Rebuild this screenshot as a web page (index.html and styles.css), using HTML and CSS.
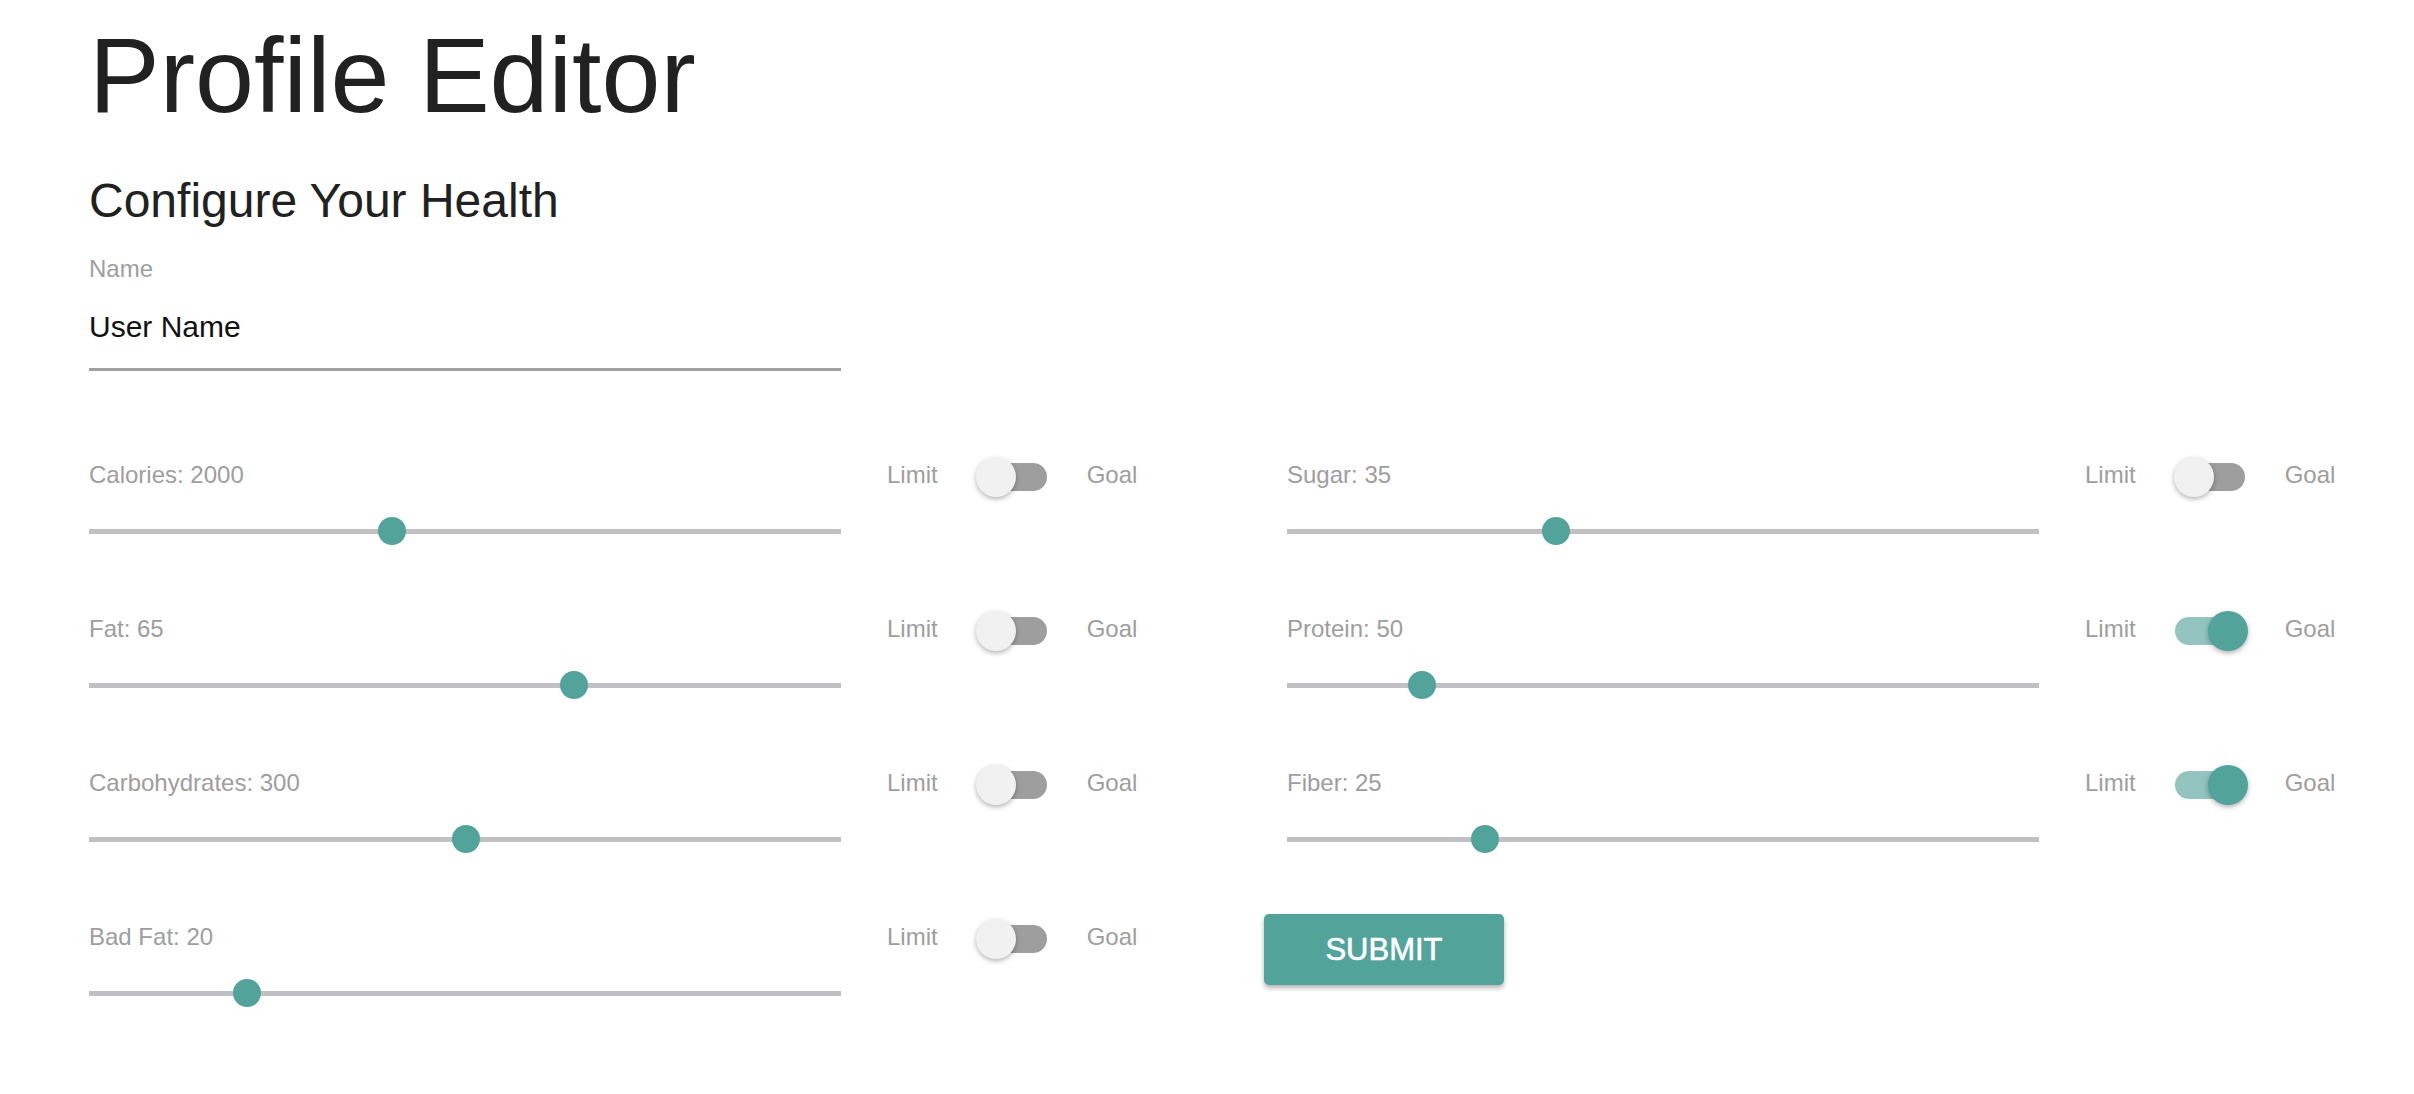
FILE: index.html
```html
<!DOCTYPE html>
<html lang="en">
<head>
<meta charset="utf-8">
<title>Profile Editor</title>
<link rel="stylesheet" href="styles.css">
</head>
<body>
<div class="page">
  <h1 class="title">Profile Editor</h1>
  <h2 class="subtitle">Configure Your Health</h2>
  <div class="field">
    <div class="field-label">Name</div>
    <div class="field-value">User Name</div>
  </div>
  <div class="grid">
    <div class="col">
      <div class="row">
        <div class="slider">
          <div class="slider-label">Calories: 2000</div>
          <div class="track-wrap"><div class="track"><div class="thumb" style="left:40.3%"></div></div></div>
        </div>
        <div class="controls"><span class="ctl-text">Limit</span><div class="toggle"><div class="toggle-track"></div><div class="toggle-thumb"></div></div><span class="ctl-text">Goal</span></div>
      </div>
      <div class="row">
        <div class="slider">
          <div class="slider-label">Fat: 65</div>
          <div class="track-wrap"><div class="track"><div class="thumb" style="left:64.5%"></div></div></div>
        </div>
        <div class="controls"><span class="ctl-text">Limit</span><div class="toggle"><div class="toggle-track"></div><div class="toggle-thumb"></div></div><span class="ctl-text">Goal</span></div>
      </div>
      <div class="row">
        <div class="slider">
          <div class="slider-label">Carbohydrates: 300</div>
          <div class="track-wrap"><div class="track"><div class="thumb" style="left:50.1%"></div></div></div>
        </div>
        <div class="controls"><span class="ctl-text">Limit</span><div class="toggle"><div class="toggle-track"></div><div class="toggle-thumb"></div></div><span class="ctl-text">Goal</span></div>
      </div>
      <div class="row">
        <div class="slider">
          <div class="slider-label">Bad Fat: 20</div>
          <div class="track-wrap"><div class="track"><div class="thumb" style="left:21%"></div></div></div>
        </div>
        <div class="controls"><span class="ctl-text">Limit</span><div class="toggle"><div class="toggle-track"></div><div class="toggle-thumb"></div></div><span class="ctl-text">Goal</span></div>
      </div>
    </div>
    <div class="col">
      <div class="row">
        <div class="slider">
          <div class="slider-label">Sugar: 35</div>
          <div class="track-wrap"><div class="track"><div class="thumb" style="left:35.8%"></div></div></div>
        </div>
        <div class="controls"><span class="ctl-text">Limit</span><div class="toggle"><div class="toggle-track"></div><div class="toggle-thumb"></div></div><span class="ctl-text">Goal</span></div>
      </div>
      <div class="row">
        <div class="slider">
          <div class="slider-label">Protein: 50</div>
          <div class="track-wrap"><div class="track"><div class="thumb" style="left:18%"></div></div></div>
        </div>
        <div class="controls"><span class="ctl-text">Limit</span><div class="toggle on"><div class="toggle-track"></div><div class="toggle-thumb"></div></div><span class="ctl-text">Goal</span></div>
      </div>
      <div class="row">
        <div class="slider">
          <div class="slider-label">Fiber: 25</div>
          <div class="track-wrap"><div class="track"><div class="thumb" style="left:26.3%"></div></div></div>
        </div>
        <div class="controls"><span class="ctl-text">Limit</span><div class="toggle on"><div class="toggle-track"></div><div class="toggle-thumb"></div></div><span class="ctl-text">Goal</span></div>
      </div>
      <div class="row">
        <button class="submit" type="button">SUBMIT</button>
      </div>
    </div>
  </div>
</div>
</body>
</html>
```
FILE: styles.css
```css
body {
  margin: 0;
  background: #ffffff;
  font-family: "Liberation Sans", Arial, Helvetica, sans-serif;
}

.page {
  padding: 22px 0 0 89px;
}

.title {
  margin: 0;
  font-size: 106px;
  line-height: 106px;
  font-weight: normal;
  color: #212121;
}

.subtitle {
  margin: 49px 0 0;
  font-size: 48px;
  line-height: 48px;
  font-weight: normal;
  color: #212121;
}

.field {
  width: 752px;
  margin-top: 32px;
}

.field-label {
  font-size: 24px;
  line-height: 24px;
  color: #9e9e9e;
}

.field-value {
  margin-top: 31px;
  font-size: 30px;
  line-height: 30px;
  color: #111111;
  padding-bottom: 26px;
  border-bottom: 3px solid #a0a0a0;
}

.grid {
  display: flex;
  gap: 149px;
  margin-top: 86px;
}

.col {
  width: 1049px;
  display: flex;
  flex-direction: column;
}

.row {
  height: 154px;
  display: flex;
  align-items: flex-start;
}

.slider {
  width: 752px;
  padding-top: 6px;
}

.slider-label {
  font-size: 24px;
  line-height: 24px;
  color: #9e9e9e;
}

.track-wrap {
  height: 28px;
  margin-top: 30px;
  display: flex;
  align-items: center;
}

.track {
  position: relative;
  width: 100%;
  height: 5px;
  background: #c0bfc1;
}

.thumb {
  position: absolute;
  top: 50%;
  width: 28px;
  height: 28px;
  margin: -14px 0 0 -14px;
  border-radius: 50%;
  background: #52a39a;
}

.controls {
  display: flex;
  align-items: center;
  height: 40px;
  margin-left: 46px;
  font-size: 24px;
  line-height: 24px;
  color: #9e9e9e;
}

.ctl-text {
  margin-bottom: 4px;
}

.toggle {
  position: relative;
  width: 74px;
  height: 40px;
  margin: 0 37px 0 38px;
  display: flex;
  align-items: center;
}

.toggle-track {
  margin-left: 1px;
  width: 70px;
  height: 28px;
  border-radius: 14px;
  background: #9e9e9e;
}

.toggle-thumb {
  position: absolute;
  left: 0;
  top: 0;
  width: 40px;
  height: 40px;
  border-radius: 50%;
  background: #f1f1f1;
  box-shadow: 0 2px 5px rgba(0, 0, 0, 0.3);
}

.toggle.on .toggle-track {
  background: #93c4bf;
}

.toggle.on .toggle-thumb {
  left: 34px;
  background: #52a39a;
}

.submit {
  margin: -5px 0 0 -23px;
  width: 240px;
  height: 71px;
  border: none;
  border-radius: 5px;
  background: #52a39a;
  color: #ffffff;
  font-family: "Liberation Sans", Arial, Helvetica, sans-serif;
  font-size: 31px;
  -webkit-text-stroke: 0.6px #ffffff;
  padding: 0;
  box-shadow: 0 3px 5px rgba(0, 0, 0, 0.3);
  cursor: pointer;
}
```
